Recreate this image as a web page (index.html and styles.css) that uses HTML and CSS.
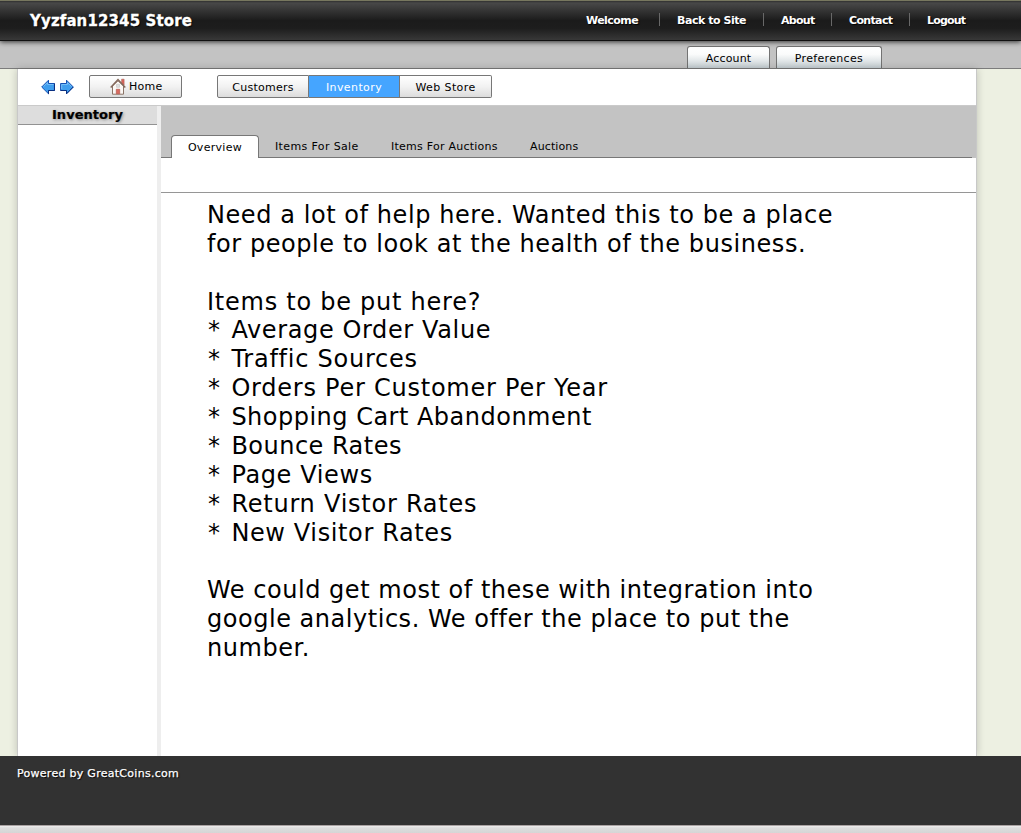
FILE: index.html
```html
<!DOCTYPE html>
<html lang="en">
<head>
<meta charset="utf-8">
<title>Yyzfan12345 Store</title>
<link rel="stylesheet" href="styles.css">
</head>
<body>
<header class="topbar">
  <h1 class="brand">Yyzfan12345 Store</h1>
  <nav class="topnav">
    <a class="welcome">Welcome</a><a class="back">Back to Site</a><a class="about">About</a><a class="contact">Contact</a><a class="logout">Logout</a>
  </nav>
</header>
<div class="subbar">
  <a class="subtab account">Account</a>
  <a class="subtab prefs">Preferences</a>
</div>
<div class="page">
  <div class="toolbar">
    <svg class="arrow" width="14" height="16" viewBox="0 0 14 16"><path d="M.7 8 7.5 1.2V4.5H13.4v7H7.5v3.3z" fill="#3f9eee" stroke="#1450b4" stroke-width="1"/><path d="M2.5 7.5 6.5 3.7v1.8h6" fill="none" stroke="#74bdf7"/><path d="M7.5 14.8V11.5h6v-7" fill="none" stroke="#0a2f80"/></svg>
    <svg class="arrow" width="14" height="16" viewBox="0 0 14 16"><path d="M13.3 8 6.5 1.2V4.5H.6v7H6.5v3.3z" fill="#3f9eee" stroke="#1450b4" stroke-width="1"/><path d="M1.7 10V5.5h5.8V3.7l4 3.8" fill="none" stroke="#74bdf7"/><path d="M.6 11.5h5.9v3.3L13.3 8" fill="none" stroke="#0a2f80"/></svg>
    <a class="btn home">
      <svg width="16" height="17" viewBox="0 0 16 17"><path d="M11.6 1.2h2.5V7h-2.5z" fill="#d9655a" stroke="#b0675c" stroke-width=".6"/><path d="M2.5 8 8 2.8 13.5 8v8.2h-11z" fill="#fbf8f5" stroke="#8b7467"/><path d="M.7 9.4 8 1.5l7.3 7.9" fill="none" stroke="#84695c" stroke-width="1.5"/><path d="M6.5 6.3h3v3h-3z" fill="#dedede" stroke="#c4c4c4" stroke-width=".6"/><path d="M6.3 11.3h3.4v4.5H6.3z" fill="#d96a5f" stroke="#b5584d" stroke-width=".7"/></svg>
      <span>Home</span>
    </a>
    <div class="group">
      <a class="btn seg first">Customers</a><a class="btn seg active">Inventory</a><a class="btn seg last">Web Store</a>
    </div>
  </div>
  <div class="columns">
    <aside class="sidebar"><h2>Inventory</h2></aside>
    <main class="main">
      <nav class="tabs">
        <a class="tab current">Overview</a>
        <a class="tab sale">Items For Sale</a>
        <a class="tab forauc">Items For Auctions</a>
        <a class="tab auc">Auctions</a>
      </nav>
      <div class="strip"></div>
      <div class="content">
        <p>Need a lot of help here. Wanted this to be a place<br>for people to look at the health of the business.</p>
        <p class="lead">Items to be put here?</p>
        <ul class="items">
          <li><b>*</b>Average Order Value</li>
          <li class="wide"><b>*</b>Traffic Sources</li>
          <li class="wide"><b>*</b>Orders Per Customer Per Year</li>
          <li class="tight"><b>*</b>Shopping Cart Abandonment</li>
          <li class="tight"><b>*</b>Bounce Rates</li>
          <li><b>*</b>Page Views</li>
          <li class="wide"><b>*</b>Return Vistor Rates</li>
          <li><b>*</b>New Visitor Rates</li>
        </ul>
        <p class="closing">We could get most of these with integration into<br>google analytics. We offer the place to put the<br>number.</p>
      </div>
    </main>
  </div>
</div>
<footer class="footer">Powered by GreatCoins.com</footer>
<div class="status"></div>
</body>
</html>
```
FILE: styles.css
```css
* { box-sizing: border-box; }
body { margin: 0; height: 833px; overflow: hidden; display: flex; flex-direction: column; background: #edf0e2; font: 11px/14px "DejaVu Sans", Verdana, sans-serif; color: #000; }
.topbar { position: relative; z-index: 2; flex: none; height: 41px; display: flex; justify-content: space-between; border-top: 1px solid #77775f; border-bottom: 1px solid #111; background: linear-gradient(#303030 0, #484848 2px, #1b1b1b 50%, #1d1d1d 70%, #383838 100%); box-shadow: 0 1px 5px rgba(0,0,0,.75); color: #fff; text-shadow: 1px 1px 1px #000; }
.brand { margin: 10px 0 0 30px; font-size: 15px; line-height: 20px; font-weight: bold; letter-spacing: .12px; white-space: nowrap; -webkit-text-stroke: .3px #fff; }
.topnav { display: flex; margin: 12px 38px 0 0; font-weight: bold; letter-spacing: -.55px; }
.topnav a { height: 13px; padding: 0 17px; line-height: 16px; white-space: nowrap; }
.topnav a + a { border-left: 1px solid #686868; }
.topnav .welcome { width: 90px; }
.topnav .back { width: 104px; letter-spacing: -.45px; }
.topnav .about { width: 68px; letter-spacing: -.7px; }
.topnav .contact { width: 78px; letter-spacing: -.65px; }
.topnav .logout { width: 74px; letter-spacing: -.8px; }
.subbar { flex: none; height: 28px; display: flex; gap: 6px; padding: 5px 0 0 687px; background: #c3c3c3; border-bottom: 1px solid #7c7c7c; }
.subtab { height: 22px; border: 1px solid #737373; border-bottom: 0; border-radius: 3px 3px 0 0; background: linear-gradient(#fff, #fafbfb 35%, #c6cfd3); text-align: center; line-height: 23px; letter-spacing: .15px; }
.account { width: 83px; }
.prefs { width: 106px; letter-spacing: .33px; }
.page { flex: none; width: 960px; height: 687px; margin-left: 17px; display: flex; flex-direction: column; background: #fff; border: solid #c8c8c8; border-width: 0 1px; box-shadow: 0 0 8px rgba(0,0,0,.2); }
.toolbar { height: 36px; padding: 6px 0 0 23px; display: flex; }
.arrow { margin: 4px 5px 0 0; flex: none; }
.btn { height: 23px; border: 1px solid #777; background: linear-gradient(#fff, #f2f2f2 50%, #dcdcdc); line-height: 23px; text-align: center; letter-spacing: .25px; }
.home { width: 93px; margin-left: 10px; border-radius: 2px; display: flex; gap: 3px; padding-left: 20px; line-height: 21px; }
.home svg { margin-top: 2px; }
.group { display: flex; margin-left: 35px; }
.seg { width: 92px; }
.seg + .seg { border-left: 0; width: 91px; }
.group .seg.last { width: 92px; letter-spacing: .4px; }
.seg.first { border-radius: 2px 0 0 2px; }
.seg.last { border-radius: 0 2px 2px 0; }
.seg.active { background: #45a5ff; color: #fff; letter-spacing: .4px; }
.columns { flex: 1; display: flex; border-top: 1px solid #cacaca; }
.sidebar { width: 143px; border-right: 4px solid #eee; }
.sidebar h2 { margin: 0; height: 19px; background: #ddd; border-bottom: 1px solid #929292; font-size: 13px; line-height: 17px; text-align: center; letter-spacing: .05px; text-shadow: 1px 1px 3px #888; -webkit-text-stroke: .2px #000; }
.main { flex: 1; }
.tabs { height: 52px; padding: 29px 0 0 10px; display: flex; background: linear-gradient(#777, #777) 0 51px / 811px 1px no-repeat #c3c3c3; }
.tab { height: 22px; line-height: 23px; white-space: nowrap; letter-spacing: .3px; }
.tabs .current { width: 88px; height: 23px; line-height: 23px; border: 1px solid #777; border-bottom: 0; border-radius: 4px 4px 0 0; background: #fff; text-align: center; }
.sale { width: 116px; margin-left: 16px; letter-spacing: .37px; }
.tabs .forauc { width: 139px; letter-spacing: .25px; }
.auc { letter-spacing: .12px; }
.strip { height: 35px; border-bottom: 1px solid #969696; }
.content { padding: 8px 0 0 46px; font-size: 24px; line-height: 28.87px; white-space: nowrap; letter-spacing: .57px; }
.content p { margin: 0 0 28.87px; }
.content .lead { margin-bottom: 0; letter-spacing: .75px; }
.content .closing { letter-spacing: .53px; }
.items { margin: 0 0 28.87px; padding: 0; list-style: none; }
.items li { display: flex; letter-spacing: .62px; }
.items b { width: 24.4px; padding-left: 1px; font-weight: normal; }
.items .wide { letter-spacing: .76px; }
.items .tight { letter-spacing: .49px; }
.footer { flex: none; height: 69px; padding: 11px 17px; background: #323232; color: #fff; font-size: 11px; letter-spacing: .28px; text-shadow: 1px 1px 1px #000; -webkit-text-stroke: .25px #fff; }
.status { flex: 1; border-top: 1px solid #aaa3a3; background: linear-gradient(#eee 0, #ddd 2px, #d6d6d6); }
```
